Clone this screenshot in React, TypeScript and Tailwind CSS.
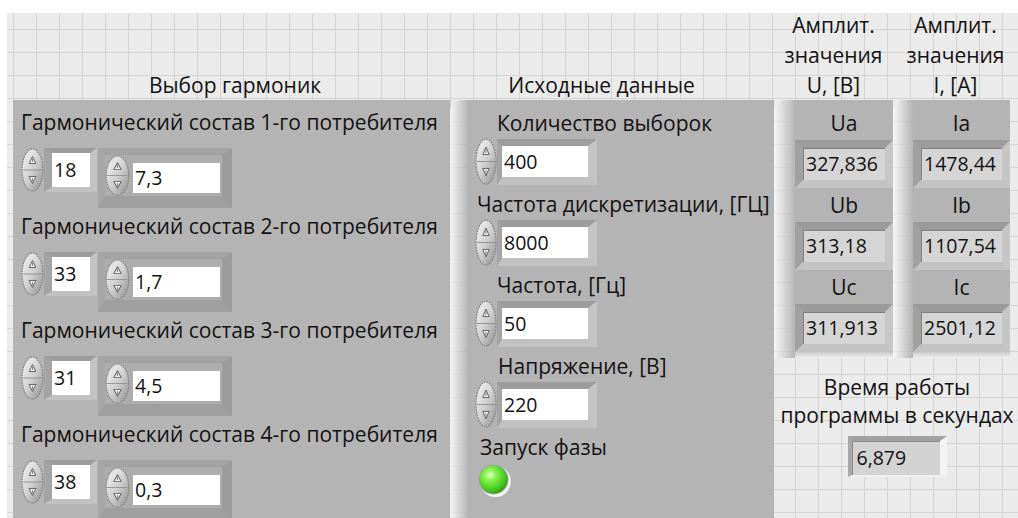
const gridBg =
  "bg-[#ebebeb] bg-[linear-gradient(to_right,#d4d4d4_1px,transparent_1px),linear-gradient(to_bottom,#d4d4d4_1px,transparent_1px)] bg-[size:23px_23px] bg-[position:6px_16px]";

// light raised edge on the left side of every cluster; the grid shows through it a little
const bevel =
  "bg-[linear-gradient(to_right,rgba(255,255,255,0.6),rgba(172,172,172,0.85))] [clip-path:polygon(0_9px,8px_0,100%_0,100%_100%,0_100%)]";

function Spinner({ w = 22, h = 44 }: { w?: number; h?: number }) {
  return (
    <svg width={w} height={h} viewBox="0 0 22 44" preserveAspectRatio="none" className="shrink-0">
      <defs>
        <linearGradient id="spinFill" x1="0" y1="0" x2="1" y2="1">
          <stop offset="0" stopColor="#f5f5f5" />
          <stop offset="0.5" stopColor="#d0d0d0" />
          <stop offset="1" stopColor="#8e8e8e" />
        </linearGradient>
      </defs>
      <ellipse cx="11" cy="22" rx="10" ry="21" fill="url(#spinFill)" stroke="#878787" strokeWidth="1.3" strokeDasharray="1.6 1" />
      <line x1="2" y1="22" x2="20" y2="22" stroke="#959595" strokeWidth="1" />
      <path d="M11 8.5 L7.8 15.5 H14.2 Z" fill="#ededed" stroke="#5e5e5e" strokeWidth="0.9" />
      <path d="M11 10.5 V14" stroke="#5e5e5e" strokeWidth="0.7" />
      <path d="M7.8 28.5 H14.2 L11 35.5 Z" fill="#ededed" stroke="#5e5e5e" strokeWidth="0.9" />
      <path d="M11 30 V33.5" stroke="#5e5e5e" strokeWidth="0.7" />
    </svg>
  );
}

function Led() {
  return (
    <svg width="34" height="34" viewBox="0 0 34 34">
      <defs>
        <radialGradient id="ledGlow" cx="0.38" cy="0.34" r="0.7">
          <stop offset="0" stopColor="#dcffc0" />
          <stop offset="0.3" stopColor="#86f24f" />
          <stop offset="0.8" stopColor="#3fc41a" />
          <stop offset="1" stopColor="#2c9a10" />
        </radialGradient>
      </defs>
      <circle cx="17.5" cy="17.5" r="15.5" fill="#f1f1f1" />
      <circle cx="15.5" cy="15.5" r="15" fill="#a2a2a2" />
      <circle cx="15.5" cy="15.5" r="14" fill="url(#ledGlow)" />
    </svg>
  );
}

function HarmonicRow({ n, order, amp }: { n: number; order: string; amp: string }) {
  return (
    <div className="h-[104px]">
      <div className="h-[26px] leading-[26px] whitespace-nowrap">Гармонический состав {n}-го потребителя</div>
      <div className="mt-[13px] flex items-start text-[19.5px]">
        <div className="flex items-center">
          <Spinner w={23} h={44} />
          <div className="border-t-[5px] border-l-[8px] border-r-[7px] border-b-[5px] border-t-[#9d9d9d] border-l-[#a4a4a4] border-r-[#c3c3c3] border-b-[#c1c1c1]">
            <div className="h-[34px] w-[38px] bg-white pl-[2px] leading-[34px]">{order}</div>
          </div>
        </div>
        <div className="ml-[1px] border-t-[7px] border-l-[7px] border-r-[10px] border-b-[12px] border-t-[#a3a3a3] border-l-[#a7a7a7] border-r-[#9c9c9c] border-b-[#9f9f9f]">
          <div className="flex h-[41px] bg-[#adadad] pr-[2px]">
            <Spinner w={25} h={41} />
            <div className="ml-[3px] mt-[8px] h-[30px] w-[87px] bg-white pl-[2px] leading-[30px]">{amp}</div>
          </div>
        </div>
      </div>
    </div>
  );
}

function InputRow({ label, value, indent }: { label: string; value: string; indent: string }) {
  return (
    <div className="mb-[7px]">
      <div className={`h-[24px] leading-[24px] whitespace-nowrap ${indent}`}>{label}</div>
      <div className="mt-[3px] ml-[7px] flex items-center text-[19.5px]">
        <Spinner w={22} h={47} />
        <div className="border-t-[7px] border-l-[5px] border-r-[9px] border-b-[8px] border-t-[#9d9d9d] border-l-[#a4a4a4] border-r-[#c4c4c4] border-b-[#c1c1c1]">
          <div className="h-[31px] w-[86px] bg-white pl-[2px] leading-[31px]">{value}</div>
        </div>
      </div>
    </div>
  );
}

function Indicator({ label, value, boxW }: { label: string; value: string; boxW: string }) {
  return (
    <div>
      <div className="h-[34px] text-center leading-[34px]">{label}</div>
      <div className="w-fit border-t-[8px] border-l-[8px] border-r-[8px] border-b-[8px] border-t-[#9b9b9b] border-l-[#a1a1a1] border-r-[#c6c6c6] border-b-[#c3c3c3]">
        <div className={`h-[32px] ${boxW} bg-[#d5d5d5] pl-[3px] text-[19.5px] leading-[32px] shadow-[inset_1px_1px_0_#808080]`}>{value}</div>
      </div>
    </div>
  );
}

function AmpCluster({ rows, bevelW, boxW }: { rows: [string, string][]; bevelW: string; boxW: string }) {
  return (
    <div className="flex">
      <div className={`${bevelW} ${bevel}`} />
      <div className="flex flex-col">
        <div className="bg-[#b4b4b4] pt-[6px]">
          {rows.map(([label, value]) => (
            <Indicator key={label} label={label} value={value} boxW={boxW} />
          ))}
        </div>
        <div className="h-[6px] bg-[linear-gradient(to_bottom,#c9c9c9,#efefef)]" />
      </div>
    </div>
  );
}

export default function App() {
  return (
    <div className="h-[518px] w-[1018px] overflow-hidden bg-white pl-[7px] pt-[13px] font-['Open_Sans',sans-serif] text-[21px] text-[#141212]">
      <div className={`flex h-full ${gridBg}`}>
        {/* Выбор гармоник */}
        <div className="ml-[6px] flex w-[437px] flex-col">
          <div className="flex h-[87px] items-end justify-center pl-[7px] leading-[30px]">Выбор гармоник</div>
          <div className="flex-1 overflow-hidden bg-[#b4b4b4] pl-[8px] pt-[9px]">
            <HarmonicRow n={1} order="18" amp="7,3" />
            <HarmonicRow n={2} order="33" amp="1,7" />
            <HarmonicRow n={3} order="31" amp="4,5" />
            <HarmonicRow n={4} order="38" amp="0,3" />
          </div>
        </div>

        {/* Исходные данные */}
        <div className="flex w-[324px] flex-col">
          <div className="flex h-[87px] items-end justify-center pr-[21px] leading-[30px]">Исходные данные</div>
          <div className="flex flex-1">
            <div className={`w-[18px] ${bevel}`} />
            <div className="flex-1 overflow-hidden bg-[#b4b4b4] pt-[11px]">
              <InputRow label="Количество выборок" value="400" indent="pl-[29px]" />
              <InputRow label="Частота дискретизации, [ГЦ]" value="8000" indent="pl-[9px]" />
              <InputRow label="Частота, [Гц]" value="50" indent="pl-[29px]" />
              <InputRow label="Напряжение, [В]" value="220" indent="pl-[30px]" />
              <div className="h-[24px] pl-[12px] leading-[24px]">Запуск фазы</div>
              <div className="mt-[5px] pl-[10px]">
                <Led />
              </div>
            </div>
          </div>
        </div>

        {/* Амплитудные значения и время работы */}
        <div className="flex w-[238px] flex-col">
          <div className="flex h-[87px]">
            <div className="flex w-[119px] flex-col items-center justify-end text-center leading-[30px]">
              <span>Амплит.</span>
              <span>значения</span>
              <span>U, [В]</span>
            </div>
            <div className="flex w-[119px] flex-col items-center justify-end pl-[6px] text-center leading-[30px]">
              <span>Амплит.</span>
              <span>значения</span>
              <span>I, [А]</span>
            </div>
          </div>
          <div className="flex">
            <AmpCluster
              bevelW="w-[21px]"
              boxW="w-[82px]"
              rows={[
                ['Ua', '327,836'],
                ['Ub', '313,18'],
                ['Uc', '311,913'],
              ]}
            />
            <AmpCluster
              bevelW="w-[20px]"
              boxW="w-[81px]"
              rows={[
                ['Ia', '1478,44'],
                ['Ib', '1107,54'],
                ['Ic', '2501,12'],
              ]}
            />
          </div>
          <div className="mt-[15px] flex flex-col items-center pl-[8px] leading-[28px] whitespace-nowrap">
            <span>Время работы</span>
            <span>программы в секундах</span>
            <div className="mt-[7px] border-t-[5px] border-l-[4px] border-r-[7px] border-b-[2px] border-t-[#a2a2a2] border-l-[#a8a8a8] border-r-[#f3f3f3] border-b-[#f0f0f0]">
              <div className="h-[34px] w-[88px] bg-[#d3d3d3] pl-[5px] text-[19.5px] leading-[34px] shadow-[inset_1px_1px_0_#8a8a8a]">6,879</div>
            </div>
          </div>
        </div>
      </div>
    </div>
  );
}
